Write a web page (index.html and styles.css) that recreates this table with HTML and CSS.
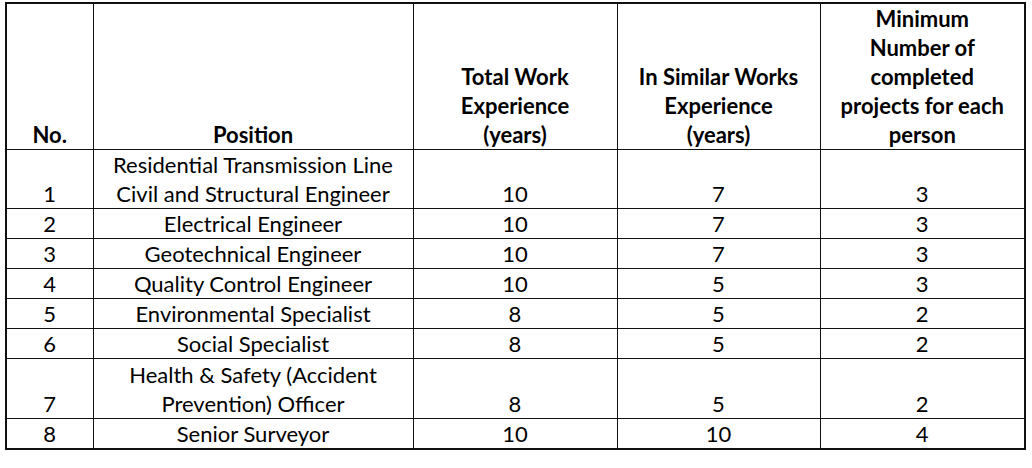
FILE: index.html
```html
<!DOCTYPE html>
<html>
<head>
<meta charset="utf-8">
<link rel="stylesheet" href="styles.css">
</head>
<body>
<table class="staff">
  <colgroup>
    <col class="c-no">
    <col class="c-pos">
    <col class="c-total">
    <col class="c-sim">
    <col class="c-min">
  </colgroup>
  <thead>
    <tr class="head">
      <th>No.</th>
      <th>Position</th>
      <th>Total Work<br>Experience<br>(years)</th>
      <th>In Similar Works<br>Experience<br>(years)</th>
      <th>Minimum<br>Number of<br>completed<br>projects for each<br>person</th>
    </tr>
  </thead>
  <tbody>
    <tr class="tall"><td>1</td><td>Residential Transmission Line<br>Civil and Structural Engineer</td><td>10</td><td>7</td><td>3</td></tr>
    <tr class="row"><td>2</td><td>Electrical Engineer</td><td>10</td><td>7</td><td>3</td></tr>
    <tr class="row"><td>3</td><td>Geotechnical Engineer</td><td>10</td><td>7</td><td>3</td></tr>
    <tr class="row"><td>4</td><td>Quality Control Engineer</td><td>10</td><td>5</td><td>3</td></tr>
    <tr class="row"><td>5</td><td>Environmental Specialist</td><td>8</td><td>5</td><td>2</td></tr>
    <tr class="row"><td>6</td><td>Social Specialist</td><td>8</td><td>5</td><td>2</td></tr>
    <tr class="tall"><td>7</td><td>Health &amp; Safety (Accident<br>Prevention) Officer</td><td>8</td><td>5</td><td>2</td></tr>
    <tr class="row"><td>8</td><td>Senior Surveyor</td><td>10</td><td>10</td><td>4</td></tr>
  </tbody>
</table>
</body>
</html>
```

FILE: styles.css
```css
html, body {
  margin: 0;
  padding: 0;
  background: #fff;
}
body {
  padding: 2px 0 0 5px;
  font-family: Lato, "Liberation Sans", sans-serif;
  color: #000;
}
.staff {
  border-collapse: collapse;
  table-layout: fixed;
  width: 1019px;
  border: 2px solid #111;
  font-size: 22px;
  line-height: 29px;
}
.c-no { width: 87px; }
.c-pos { width: 320px; }
.c-total { width: 204px; }
.c-sim { width: 203px; }
.c-min { width: 205px; }
.staff th, .staff td {
  border: 1px solid #111;
  padding: 0;
  text-align: center;
  vertical-align: bottom;
}
.staff th {
  font-weight: 700;
}
.head { height: 146px; }
.row { height: 30px; }
.tall { height: 60px; }
.staff tbody tr:first-child { height: 59px; }
```
